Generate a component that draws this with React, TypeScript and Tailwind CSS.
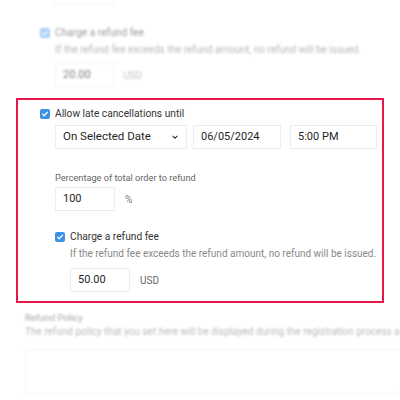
import React from 'react'

function Check({ faded = false }: { faded?: boolean }) {
  return (
    <span
      className={`flex h-[10px] w-[10px] shrink-0 items-center justify-center rounded-[2px] ${
        faded ? 'bg-[#6fb3f0]' : 'bg-[#3b93e6]'
      }`}
    >
      <svg viewBox="0 0 10 10" className="h-[8px] w-[8px]">
        <path d="M2 5.2l2 2 4-4.4" fill="none" stroke="#fff" strokeWidth="1.5" strokeLinecap="round" strokeLinejoin="round" />
      </svg>
    </span>
  )
}

function Field({ value, className = '' }: { value: string; className?: string }) {
  return (
    <div
      className={`flex items-center border border-[#ececec] bg-white px-[7px] text-[11px] text-[#1f1f1f] ${className}`}
    >
      {value}
    </div>
  )
}

export default function App() {
  const font = { fontFamily: 'Roboto, "Open Sans", sans-serif' }
  return (
    <div className="h-[400px] w-[400px] overflow-hidden bg-white" style={font}>
      {/* faded section above */}
      <div className="-mt-[21px] pl-[55px] blur-[1.2px] opacity-60">
        <Field value="" className="h-[26px] w-[60px]" />
        <div className="mt-[21px] -ml-[15px] flex h-[14px] items-center gap-[5px]">
          <Check faded />
          <span className="text-[10.2px] text-[#555]">Charge a refund fee</span>
        </div>
        <p className="mt-[3px] whitespace-nowrap text-[10px] leading-[14px] text-[#888]">
          If the refund fee exceeds the refund amount, no refund will be issued.
        </p>
        <div className="mt-[5px] flex items-center gap-[8px]">
          <Field value="20.00" className="h-[26px] w-[60px]" />
          <span className="text-[10px] text-[#999]">USD</span>
        </div>
      </div>

      {/* highlighted section */}
      <div className="mt-[10px] ml-[16px] h-[205px] w-[368px] border-2 border-[#e8174a] pt-[7px] pl-[22px]">
        <div className="flex h-[14px] items-center gap-[5px]">
          <Check />
          <span className="text-[10.2px] text-[#333]">Allow late cancellations until</span>
        </div>
        <div className="mt-[4px] ml-[15px] flex gap-[6px]">
          <div className="flex h-[24px] w-[132px] items-center justify-between border border-[#ececec] px-[7px] text-[11.5px] text-[#1f1f1f]">
            <span>On Selected Date</span>
            <svg viewBox="0 0 10 10" className="h-[8px] w-[8px]">
              <path d="M2 3.5l3 3 3-3" fill="none" stroke="#333" strokeWidth="1.4" />
            </svg>
          </div>
          <Field value="06/05/2024" className="h-[24px] w-[88px]" />
          <Field value="5:00 PM" className="ml-[3px] h-[24px] w-[87px]" />
        </div>
        <p className="mt-[23px] ml-[15px] text-[9.2px] leading-[12px] text-[#666]">
          Percentage of total order to refund
        </p>
        <div className="mt-[3px] ml-[15px] flex items-center gap-[10px]">
          <Field value="100" className="h-[24px] w-[60px]" />
          <span className="text-[10px] text-[#777]">%</span>
        </div>
        <div className="mt-[19px] ml-[15px] flex h-[14px] items-center gap-[5px]">
          <Check />
          <span className="text-[10.2px] text-[#333]">Charge a refund fee</span>
        </div>
        <p className="mt-[3px] ml-[30px] whitespace-nowrap text-[10px] leading-[14px] text-[#888]">
          If the refund fee exceeds the refund amount, no refund will be issued.
        </p>
        <div className="mt-[7px] ml-[30px] flex items-center gap-[10px]">
          <Field value="50.00" className="h-[24px] w-[60px]" />
          <span className="text-[10px] text-[#666]">USD</span>
        </div>
      </div>

      {/* faded section below */}
      <div className="mt-[9px] overflow-hidden pl-[25px] blur-[1.2px] opacity-60">
        <p className="text-[9.5px] leading-[12px] text-[#666]">Refund Policy</p>
        <p className="mt-[1px] whitespace-nowrap text-[10px] leading-[14px] text-[#888]">
          The refund policy that you set here will be displayed during the registration process and
        </p>
        <div className="mt-[10px] h-[45px] w-[400px] border border-[#ececec]" />
      </div>
    </div>
  )
}
